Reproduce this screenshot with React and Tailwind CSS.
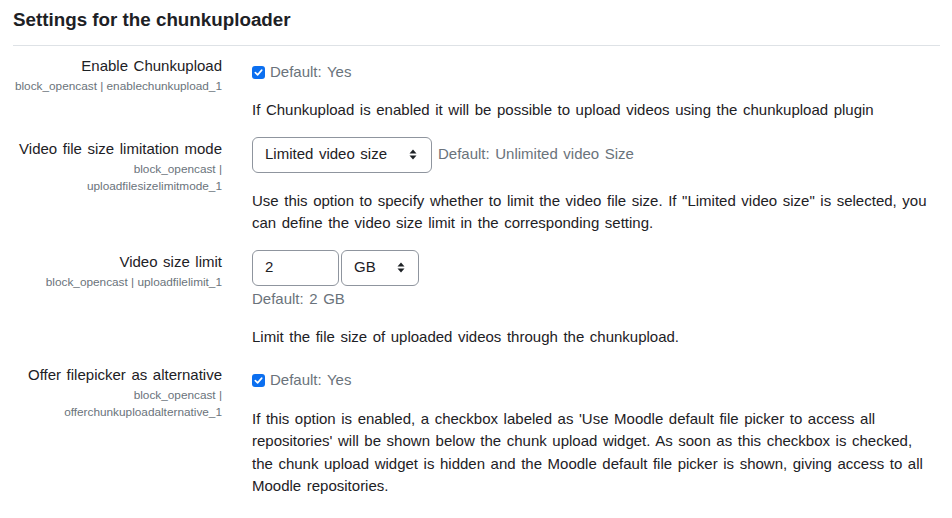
import React from "react";

function Check() {
  return (
    <span className="inline-flex w-[13px] h-[13px] rounded-[3px] bg-[#0b6ff0] items-center justify-center mr-[5px] shrink-0">
      <svg width="9" height="9" viewBox="0 0 10 10">
        <path d="M1.5 5.2 L4 7.6 L8.6 2.4" fill="none" stroke="white" strokeWidth="1.8" strokeLinecap="round" strokeLinejoin="round" />
      </svg>
    </span>
  );
}

function Arrows() {
  return (
    <svg width="8" height="11" viewBox="0 0 8 11">
      <path d="M4 0.5 L7.5 4.5 H0.5 Z" fill="#1d2125" />
      <path d="M4 10.5 L7.5 6.5 H0.5 Z" fill="#1d2125" />
    </svg>
  );
}

function Row({ label, small, children, className = "" }) {
  return (
    <div className={"flex " + className}>
      <div className="w-[239px] shrink-0 pr-[30px] text-right pt-[1px]">
        <div className="text-[15px] leading-[22px] text-[#1d2125] [word-spacing:1.4px]">{label}</div>
        <div className="text-[11.8px] leading-[17px] text-[#6a737b] mt-[1px] [word-spacing:0px] whitespace-nowrap">{small}</div>
      </div>
      <div className="w-[700px] text-[15px] text-[#1d2125] [word-spacing:1.4px]">{children}</div>
    </div>
  );
}

export default function App() {
  return (
    <div className="bg-white w-[952px] h-[518px] overflow-hidden px-[13px] pt-[7px] font-['Liberation_Sans',Arial,sans-serif]">
      <h3 className="text-[18.8px] font-bold leading-[26px] text-[#1d2125]">Settings for the chunkuploader</h3>
      <div className="h-px bg-[#dee2e6] w-[927px] mt-[12px] mb-[8px]"></div>

      <Row label="Enable Chunkupload" small="block_opencast | enablechunkupload_1" className="mb-[15px]">
        <div className="h-[36px] flex items-center text-[#6a737b]">
          <Check />
          <span>Default: Yes</span>
        </div>
        <p className="mt-[9px] leading-[22.5px]">If Chunkupload is enabled it will be possible to upload videos using the chunkupload plugin</p>
      </Row>

      <Row label="Video file size limitation mode" small={<>block_opencast |<br />uploadfilesizelimitmode_1</>} className="mb-[15px]">
        <div className="flex items-center h-[36px]">
          <div className="w-[180px] h-[36px] border border-[#8f959e] rounded-[6px] flex items-center justify-between pl-[12px] pr-[14px]">
            <span>Limited video size</span>
            <Arrows />
          </div>
          <span className="ml-[6px] text-[#6a737b]">Default: Unlimited video Size</span>
        </div>
        <p className="mt-[17px] leading-[22.5px]">Use this option to specify whether to limit the video file size. If "Limited video size" is selected, you<br />can define the video size limit in the corresponding setting.</p>
      </Row>

      <Row label="Video size limit" small="block_opencast | uploadfilelimit_1" className="mb-[14px]">
        <div className="flex items-center h-[36px]">
          <div className="w-[87px] h-[36px] border border-[#8f959e] rounded-[6px] flex items-center pl-[12px]">2</div>
          <div className="ml-[2px] w-[78px] h-[36px] border border-[#8f959e] rounded-[6px] flex items-center justify-between pl-[12px] pr-[13px]">
            <span>GB</span>
            <Arrows />
          </div>
        </div>
        <div className="mt-[2px] leading-[22.5px] text-[#6a737b]">Default: 2 GB</div>
        <p className="mt-[16px] leading-[22.5px]">Limit the file size of uploaded videos through the chunkupload.</p>
      </Row>

      <Row label="Offer filepicker as alternative" small={<>block_opencast |<br />offerchunkuploadalternative_1</>}>
        <div className="h-[36px] flex items-center text-[#6a737b]">
          <Check />
          <span>Default: Yes</span>
        </div>
        <p className="mt-[9px] leading-[22.5px]">If this option is enabled, a checkbox labeled as 'Use Moodle default file picker to access all<br />repositories' will be shown below the chunk upload widget. As soon as this checkbox is checked,<br />the chunk upload widget is hidden and the Moodle default file picker is shown, giving access to all<br />Moodle repositories.</p>
      </Row>
    </div>
  );
}
